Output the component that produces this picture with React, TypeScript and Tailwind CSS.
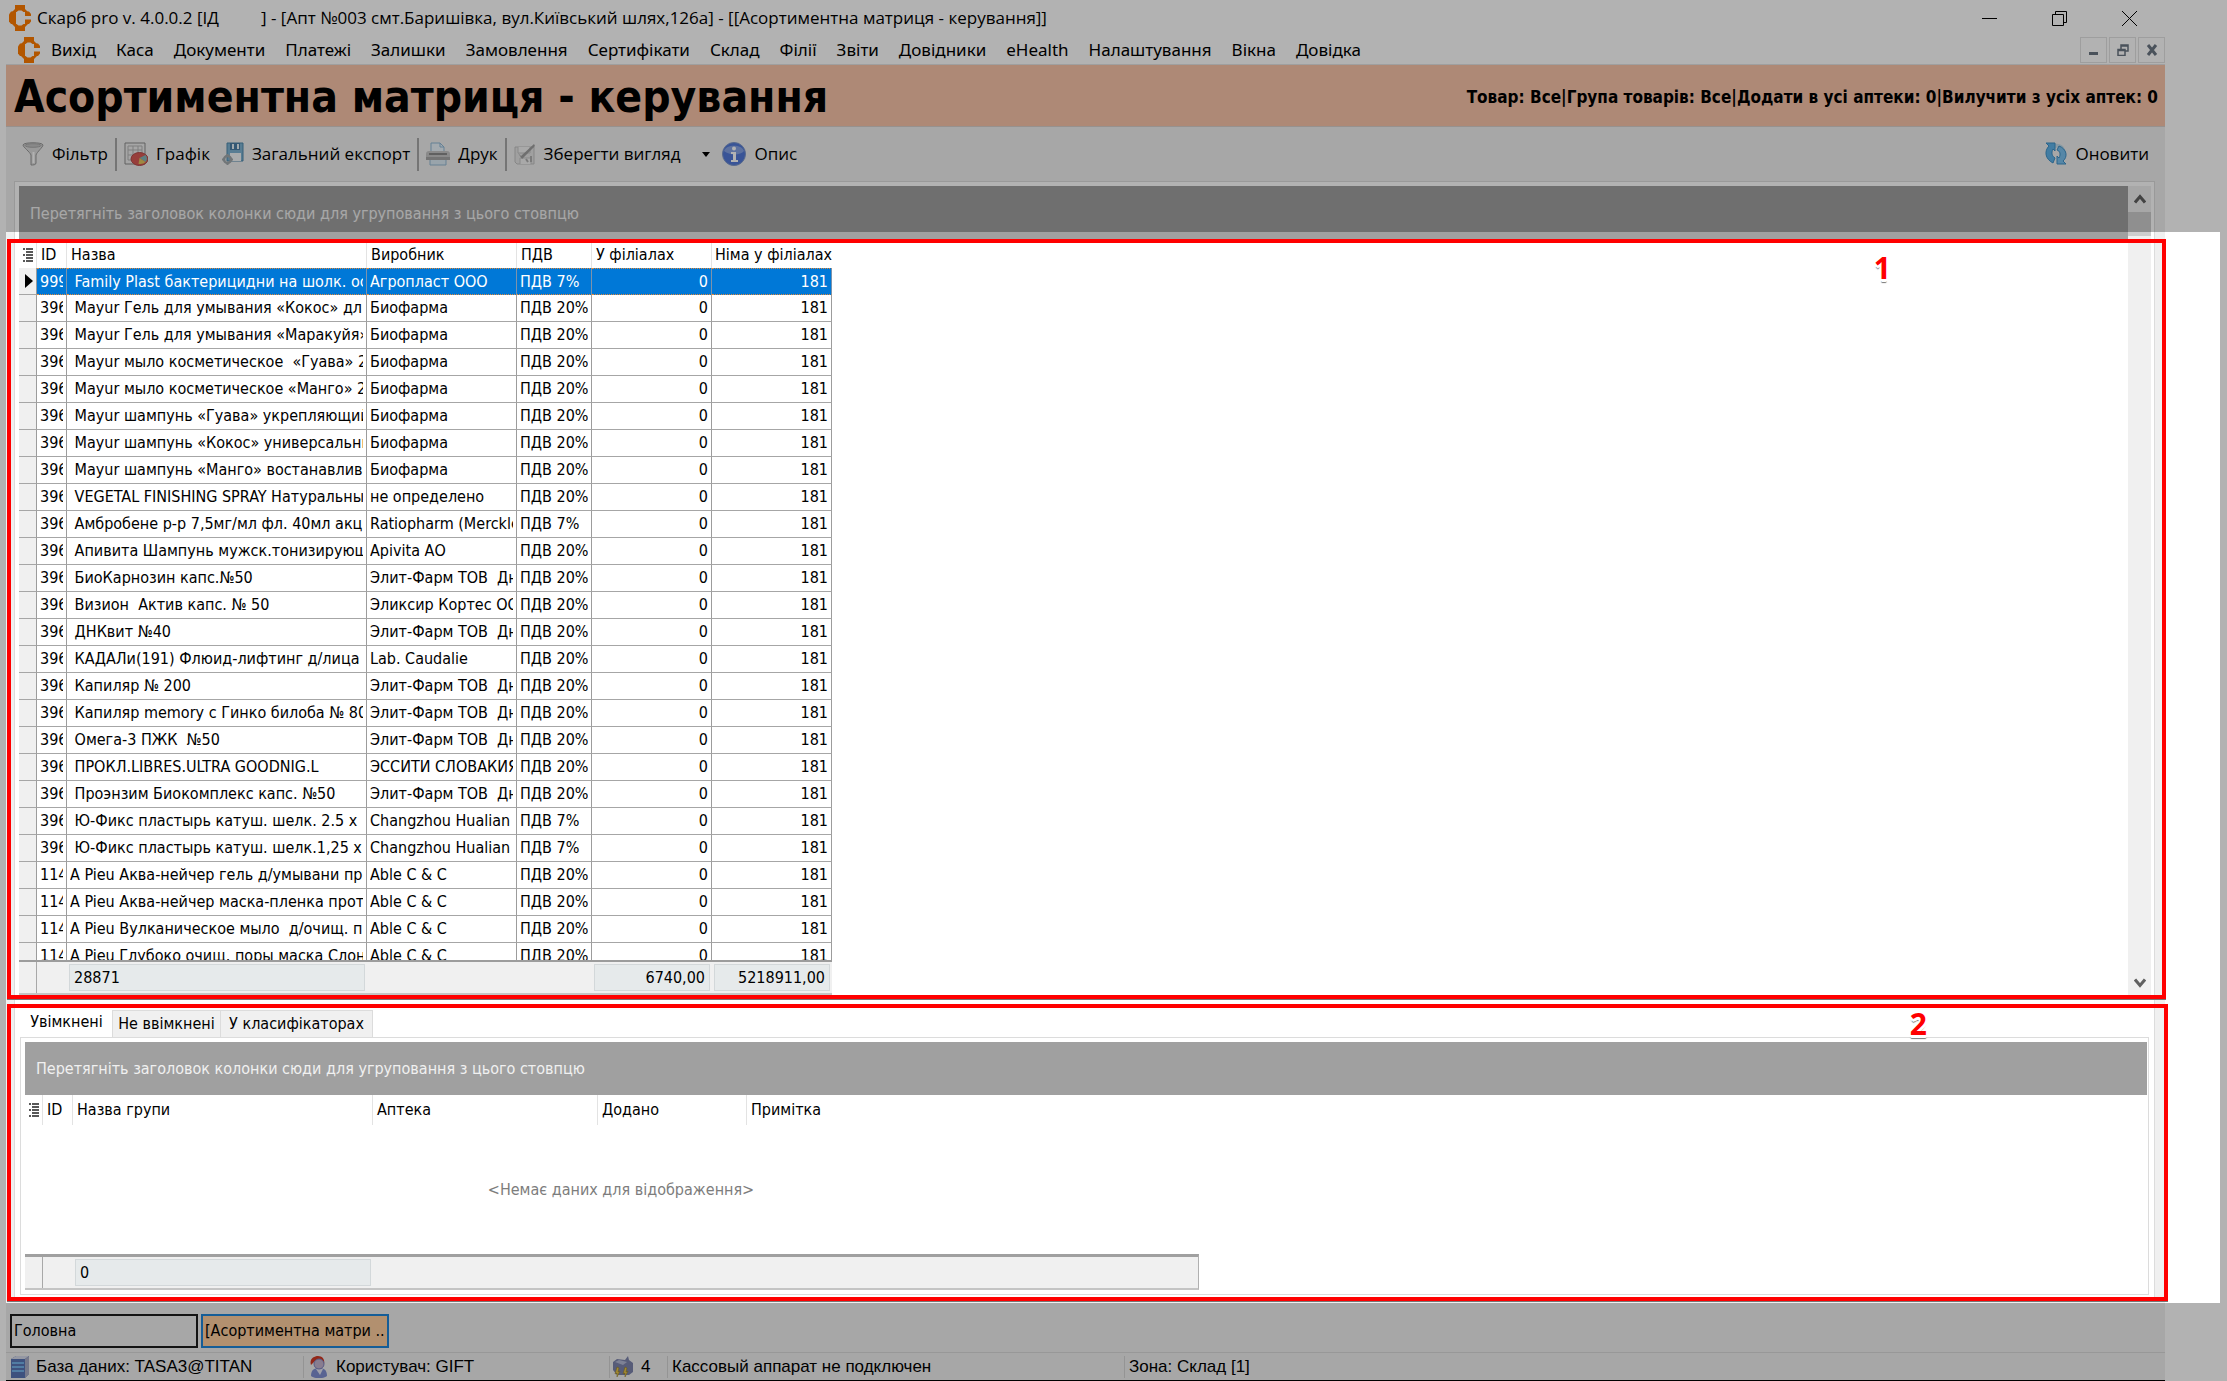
import type { ReactNode } from "react";

const MENU = [
  "Вихід", "Каса", "Документи", "Платежі", "Залишки", "Замовлення", "Сертифікати", "Склад",
  "Філії", "Звіти", "Довідники", "eHealth", "Налаштування", "Вікна", "Довідка",
];

const ROWS: [string, string, string, string][] = [
  ["999", " Family Plast бактерицидни на шолк. ос", "Агропласт ООО", "ПДВ 7%"],
  ["396", " Mayur Гель для умывания «Кокос» дл", "Биофарма", "ПДВ 20%"],
  ["396", " Mayur Гель для умывания «Маракуйя»", "Биофарма", "ПДВ 20%"],
  ["396", " Mayur мыло косметическое  «Гуава» 2", "Биофарма", "ПДВ 20%"],
  ["396", " Mayur мыло косметическое «Манго» 2", "Биофарма", "ПДВ 20%"],
  ["396", " Mayur шампунь «Гуава» укрепляющий", "Биофарма", "ПДВ 20%"],
  ["396", " Mayur шампунь «Кокос» универсальны", "Биофарма", "ПДВ 20%"],
  ["396", " Mayur шампунь «Манго» востанавлива", "Биофарма", "ПДВ 20%"],
  ["396", " VEGETAL FINISHING SPRAY Натуральны", "не определено", "ПДВ 20%"],
  ["396", " Амбробене р-р 7,5мг/мл фл. 40мл акци", "Ratiopharm (Merckle", "ПДВ 7%"],
  ["396", " Апивита Шампунь мужск.тонизирующ", "Apivita АО", "ПДВ 20%"],
  ["396", " БиоКарнозин капс.№50", "Элит-Фарм ТОВ  Дн", "ПДВ 20%"],
  ["396", " Визион  Актив капс. № 50", "Эликсир Кортес ОО", "ПДВ 20%"],
  ["396", " ДНКвит №40", "Элит-Фарм ТОВ  Дн", "ПДВ 20%"],
  ["396", " КАДАЛи(191) Флюид-лифтинг д/лица", "Lab. Caudalie", "ПДВ 20%"],
  ["396", " Капиляр № 200", "Элит-Фарм ТОВ  Дн", "ПДВ 20%"],
  ["396", " Капиляр memory с Гинко билоба № 80", "Элит-Фарм ТОВ  Дн", "ПДВ 20%"],
  ["396", " Омега-3 ПЖК  №50", "Элит-Фарм ТОВ  Дн", "ПДВ 20%"],
  ["396", " ПРОКЛ.LIBRES.ULTRA GOODNIG.L", "ЭССИТИ СЛОВАКИЯ", "ПДВ 20%"],
  ["396", " Проэнзим Биокомплекс капс. №50", "Элит-Фарм ТОВ  Дн", "ПДВ 20%"],
  ["396", " Ю-Фикс пластырь катуш. шелк. 2.5 х", "Changzhou Hualian", "ПДВ 7%"],
  ["396", " Ю-Фикс пластырь катуш. шелк.1,25 х", "Changzhou Hualian", "ПДВ 7%"],
  ["114", "A Pieu Аква-нейчер гель д/умывани пр", "Able C & C", "ПДВ 20%"],
  ["114", "A Pieu Аква-нейчер маска-пленка прот", "Able C & C", "ПДВ 20%"],
  ["114", "A Pieu Вулканическое мыло  д/очищ. п", "Able C & C", "ПДВ 20%"],
  ["114", "A Pieu Глубоко очищ. поры маска Слон", "Able C & C", "ПДВ 20%"],
];

const HINT = "Перетягніть заголовок колонки сюди для угруповання з цього стовпцю";

function Logo() {
  return (
    <svg viewBox="0 0 22 26" className="h-[26px] w-[22px] shrink-0" aria-hidden="true">
      <g fill="#ff7b00">
        <path d="M6 0h10v4l3 3h-4.500l-2-1.500h-3l-2 1.500H3l3-3z" />
        <path d="M6 26h10v-4l3-3h-4.500l-2 1.500h-3l-2-1.500H3l3 3z" />
        <path d="M2 6.500h5V19H2l-2-2.500v-7z" />
        <path d="M16 6.500h4l2 2.500v2h-6zM16 19h4l2-2.500v-2h-6z" />
      </g>
    </svg>
  );
}

function FilterIcon() {
  return (
    <svg viewBox="0 0 22 24" className="h-6 w-[22px]" aria-hidden="true">
      <path d="M1 3c0-3 20-3 20 0 0 2-6 7-7 10v8c0 2-3 2-5 2V13C8 10 1 5 1 3z" fill="#dcdcdc" stroke="#999" />
      <ellipse cx="11" cy="3.500" rx="8" ry="1.800" fill="#c4c4c4" stroke="#aaa" />
      <path d="M11.500 10v11" stroke="#fff" strokeWidth="2" />
    </svg>
  );
}

function ChartIcon() {
  return (
    <svg viewBox="0 0 24 24" className="size-6" aria-hidden="true">
      <path d="M1 1h20v21H1z" fill="#eee" stroke="#8b8b8b" />
      <path d="M4 4h14v14H4zM4 8h14M4 13h14M9 4v14M14 4v14" fill="none" stroke="#b5b5b5" />
      <ellipse cx="15.500" cy="17" rx="8.500" ry="6.500" fill="#d85a55" stroke="#b34a48" />
      <path d="M15.500 16l6-3c2 2 2 5 0 7z" fill="#86b7b9" />
      <path d="M15.500 16l6 4c-2 2-5 2-7 2z" fill="#e2c45f" />
    </svg>
  );
}

function ExportIcon() {
  return (
    <svg viewBox="0 0 22 24" className="h-6 w-[22px]" aria-hidden="true">
      <path d="M5 1h16v18H5z" fill="#7fb4d3" stroke="#4f88ab" />
      <path d="M8 1h10v7H8z" fill="#4b7ea6" />
      <path d="M10 2h2v5h-2zM15 2h2v5h-2z" fill="#e8f2f8" />
      <path d="M8 11h11v8H8z" fill="#f3f6f8" />
      <circle cx="5.500" cy="17.500" r="3.500" fill="none" stroke="#a3a9ad" strokeWidth="2.500" />
      <path d="M5.500 12v3M5.500 20v3M0 17.500h3M8 17.500h3" stroke="#a3a9ad" strokeWidth="2" />
    </svg>
  );
}

function PrinterIcon() {
  return (
    <svg viewBox="0 0 24 24" className="size-6" aria-hidden="true">
      <path d="M5 1h9l4 4v7H5z" fill="#eaf4fb" stroke="#8fb8d6" />
      <path d="M14 1v4h4" fill="none" stroke="#8fb8d6" />
      <path d="M3 9h18c2 0 3 1 3 3v6H0v-6c0-2 1-3 3-3z" fill="#c6c6c6" />
      <path d="M3 11h18v2H3z" fill="#8a8a8a" />
      <path d="M4 17h16v6H4z" fill="#dcebf5" stroke="#94b9d2" />
      <path d="M0 15h24v3H0z" fill="#a6a6a6" />
    </svg>
  );
}

function SaveViewIcon() {
  return (
    <svg viewBox="0 0 22 24" className="h-6 w-[22px]" aria-hidden="true">
      <path d="M1 5h19v17H3l-2-2z" fill="#e6e6e6" stroke="#c0c0c0" />
      <path d="M4 5v6h12V5M6 22v-6h11v6" fill="#f2f2f2" stroke="#c6c6c6" />
      <path d="M4 11l3 3L20 2l1 2L8 17z" fill="#9f9f9f" />
      <path d="M12 17l2 3M17 14v6" stroke="#b0b0b0" strokeWidth="2" />
    </svg>
  );
}

function InfoIcon() {
  return (
    <svg viewBox="0 0 24 24" className="size-6" aria-hidden="true">
      <circle cx="12" cy="12" r="11.500" fill="#5279d8" stroke="#7f98cb" />
      <path d="M2 9C4 2 20 2 22 9c-3 4-14 5-20 0z" fill="#86a3e4" />
      <circle cx="12" cy="6.500" r="2" fill="#fff" />
      <path d="M9 10h5v8h2v2H9v-2h2v-6H9z" fill="#fff" />
    </svg>
  );
}

function RefreshIcon() {
  return (
    <svg viewBox="0 0 22 24" className="h-6 w-[22px]" aria-hidden="true">
      <path d="M10 2c6-1 11 3 10 9l-4-2c0-3-3-4-6-3z" fill="#c3dcea" />
      <path d="M1 1h9v8L8 7c-2 4-1 7 2 9l-2 5C0 17-1 9 4 4z" fill="#5fb4ea" stroke="#3f90c6" />
      <path d="M21 22h-9v-8l2 2c2-4 1-7-2-8l2-4c8 3 9 11 4 15z" fill="#7cc2ef" stroke="#3f90c6" />
    </svg>
  );
}

function DatabaseIcon() {
  return (
    <svg viewBox="0 0 20 22" className="h-[22px] w-5 shrink-0" aria-hidden="true">
      <path d="M1 3l5-3h13v18l-4 4H1z" fill="#5a74b5" />
      <path d="M1 3l5-3h13l-4 3z" fill="#d6daea" />
      <path d="M15 3l4-3v18l-4 4z" fill="#a9adc6" />
      <path d="M2 7h12M2 11h12M2 15h12" stroke="#74b2ea" strokeWidth="2" />
    </svg>
  );
}

function UserIcon() {
  return (
    <svg viewBox="0 0 18 22" className="h-[22px] w-[18px] shrink-0" aria-hidden="true">
      <path d="M1 20c0-6 3-8 8-8s8 2 8 8c-4 3-12 3-16 0z" fill="#7f8fd2" />
      <path d="M6 13l4 6 3-6z" fill="#e4e6f4" />
      <path d="M1 9C-1 3 4 0 8 0c5 0 7 4 6 8l-4-4-5 1z" fill="#d23a25" />
      <circle cx="9" cy="8" r="5" fill="#c3b3cf" stroke="#7f82bd" />
    </svg>
  );
}

function PrintersIcon() {
  return (
    <svg viewBox="0 0 20 22" className="h-[22px] w-5 shrink-0" aria-hidden="true">
      <path d="M0 6l4-3 8 1 3-4 1 4 4 3v9l-4 3H4l-4-5z" fill="#7d84ad" />
      <path d="M2 6l4-2 8 2-4 3z" fill="#b4b9d6" />
      <path d="M4 11l2 1-1 4 2-1-3 6 0-4-2 1zM12 11l2 1-1 4 2-1-3 6 0-4-2 1z" fill="#e9c648" stroke="#8b7420" strokeWidth=".5" />
    </svg>
  );
}

function ListIcon() {
  return (
    <svg viewBox="0 0 10 14" className="mx-auto h-[14px] w-[10px]" aria-hidden="true">
      <path d="M3 1h7M3 4h7M3 7h7M3 10h7M3 13h7" stroke="#222" strokeWidth="1.400" />
      <path d="M0 1h2M0 7h2M0 13h2" stroke="#222" strokeWidth="1.400" />
    </svg>
  );
}

function ToolButton({ icon, children, label }: { icon: ReactNode; children?: ReactNode; label: string }) {
  return (
    <button type="button" className="flex items-center gap-2 whitespace-nowrap">
      {icon}
      {label}
      {children}
    </button>
  );
}

function Separator() {
  return <span className="mx-[7px] h-[33px] w-[2px] bg-[#a8a8a8]" />;
}

function Callout({ n, className }: { n: string; className: string }) {
  return (
    <span
      className={
        "absolute font-['Open_Sans',sans-serif] text-[30px] leading-[30px] font-bold text-[#ff0000] [text-shadow:0_3px_0_#fff,2px_2px_0_#fff,-2px_2px_0_#fff,0_4px_1px_#777] " +
        className
      }
    >
      {n}
    </span>
  );
}

const CELL = "h-[27px] border-r border-b border-b-[#a6a6a6] border-r-[#9c9c9c] p-0";
const CELL_SELECTED = "h-[27px] border-y border-r border-y-[#e08a3c] border-r-[#7d93ab] [border-bottom-style:dotted] [border-top-style:dotted] bg-[#0078d7] p-0 text-white";
const HEAD = "h-[26px] border-r border-[#e3e3e3] p-0 pl-1 text-left font-normal whitespace-nowrap";
const CLIP = "mx-[3px] overflow-hidden whitespace-pre";

function ProductTable() {
  return (
    <table className="w-[813px] table-fixed border-separate border-spacing-0">
      <colgroup>
        <col className="w-[18px]" />
        <col className="w-[30px]" />
        <col className="w-[300px]" />
        <col className="w-[150px]" />
        <col className="w-[75px]" />
        <col className="w-[120px]" />
        <col className="w-[120px]" />
      </colgroup>
      <thead>
        <tr>
          <th className="h-[26px] border-r border-[#e3e3e3] p-0"><ListIcon /></th>
          <th className={HEAD}>ID</th>
          <th className={HEAD}>Назва</th>
          <th className={HEAD}>Виробник</th>
          <th className={HEAD}>ПДВ</th>
          <th className={HEAD}>У філіалах</th>
          <th className="p-0 pl-[3px] text-left font-normal whitespace-nowrap">Німа у філіалах</th>
        </tr>
      </thead>
      <tbody>
        {ROWS.map(([id, name, maker, vat], i) => {
          const cell = i === 0 ? CELL_SELECTED : CELL;
          return (
            <tr key={i}>
              <td className={CELL + " bg-[#f0f0f0]"}>
                {i === 0 && (
                  <svg viewBox="0 0 8 14" className="ml-[6px] h-[14px] w-2" aria-hidden="true">
                    <path d="M0 0l8 7-8 7z" fill="#000" />
                  </svg>
                )}
              </td>
              <td className={cell}><div className={CLIP}>{id}</div></td>
              <td className={cell}><div className={CLIP}>{name}</div></td>
              <td className={cell}><div className={CLIP}>{maker}</div></td>
              <td className={cell}><div className={CLIP}>{vat}</div></td>
              <td className={cell}><div className="mx-[3px] text-right">0</div></td>
              <td className={cell}><div className="mx-[3px] text-right">181</div></td>
            </tr>
          );
        })}
      </tbody>
    </table>
  );
}

function GroupBar({ className }: { className: string }) {
  return (
    <div className={"flex items-center bg-[#a0a0a0] text-[#f0f0f0] " + className}>{HINT}</div>
  );
}

const SUM = "mx-[2px] my-[2px] flex items-center border border-[#d3d8da] bg-[#e6eaeb] px-1";

export default function App() {
  return (
    <div className="relative flex h-screen min-h-[1100px] flex-col overflow-hidden bg-white font-['DejaVu_Sans_Condensed','DejaVu_Sans',sans-serif] text-[16px] leading-[22px] text-black">
      <header className="flex h-9 items-center pl-[9px] pr-[90px] font-['Open_Sans',sans-serif] text-[17px]">
        <Logo />
        <h1 className="flex flex-1 pl-[6px] whitespace-nowrap">
          <span className="w-[224px]">Скарб pro v. 4.0.0.2 [ІД</span>
          <span>] - [Апт №003 смт.Баришівка, вул.Київський шлях,126а] - [[Асортиментна матриця - керування]]</span>
        </h1>
        <div className="flex gap-[55px]">
          <button type="button" aria-label="Згорнути">
            <svg viewBox="0 0 15 15" className="size-[15px]"><path d="M0 7.500h15" stroke="#000" /></svg>
          </button>
          <button type="button" aria-label="Відновити">
            <svg viewBox="0 0 15 15" className="size-[15px]"><path d="M.5 3.500h11v11H.5zM3.500 3.500v-3h11v11h-3" fill="none" stroke="#000" /></svg>
          </button>
          <button type="button" aria-label="Закрити">
            <svg viewBox="0 0 15 15" className="size-[15px]"><path d="M0 0l15 15M15 0L0 15" stroke="#000" /></svg>
          </button>
        </div>
      </header>

      <div className="mr-[62px] ml-[6px] flex min-h-0 flex-1 flex-col bg-[#f0f0f0]">
        <nav className="flex h-[29px] items-center border-b border-[#e4e4e4] bg-white pl-3">
          <Logo />
          <div className="flex flex-1 gap-5 pl-[11px] font-['Noto_Sans',sans-serif] text-[17px]">
            {MENU.map((m) => (
              <button key={m} type="button" className="whitespace-nowrap">{m}</button>
            ))}
          </div>
          <div className="flex gap-[2px]">
            <button type="button" aria-label="Згорнути вікно" className="grid h-[26px] w-[27px] place-items-center border border-[#e2e2e2]">
              <svg viewBox="0 0 12 12" className="size-3"><path d="M1 8h9v3H1z" fill="#6b7683" /></svg>
            </button>
            <button type="button" aria-label="Відновити вікно" className="grid h-[26px] w-[27px] place-items-center border border-[#e2e2e2]">
              <svg viewBox="0 0 12 12" className="size-3"><path d="M1 5.500h7v6H1zM4 5V1h7v6H8.500M4 2h7M1 6.500h7" fill="none" stroke="#6b7683" strokeWidth="1.500" /></svg>
            </button>
            <button type="button" aria-label="Закрити вікно" className="grid h-[26px] w-[27px] place-items-center border border-[#e2e2e2]">
              <svg viewBox="0 0 12 12" className="size-3"><path d="M2 1l8 10M10 1L2 11" stroke="#6b7683" strokeWidth="3" /></svg>
            </button>
          </div>
        </nav>

        <div className="flex h-[62px] items-center justify-between border-b border-[#d8d0cc] bg-[#f9c5aa] pt-[2px] pr-[7px] pl-2">
          <h2 className="text-[44px] leading-[60px] font-bold whitespace-nowrap">Асортиментна матриця - керування</h2>
          <p className="text-[17px] font-bold whitespace-nowrap">
            Товар: Все|Група товарів: Все|Додати в усі аптеки: 0|Вилучити з усіх аптек: 0
          </p>
        </div>

        <div className="flex h-[54px] items-center justify-between pr-4 pl-4 font-['Open_Sans',sans-serif] text-[17px]">
          <div className="flex items-center">
            <ToolButton icon={<FilterIcon />} label="Фільтр" />
            <Separator />
            <ToolButton icon={<ChartIcon />} label="Графік" />
            <span className="w-3" />
            <ToolButton icon={<ExportIcon />} label="Загальний експорт" />
            <Separator />
            <ToolButton icon={<PrinterIcon />} label="Друк" />
            <Separator />
            <ToolButton icon={<SaveViewIcon />} label="Зберегти вигляд">
              <svg viewBox="0 0 8 5" className="mr-3 ml-[14px] h-[5px] w-2" aria-hidden="true"><path d="M0 0h8L4 5z" /></svg>
            </ToolButton>
            <ToolButton icon={<InfoIcon />} label="Опис" />
          </div>
          <ToolButton icon={<RefreshIcon />} label="Оновити" />
        </div>

        <main className="relative flex min-h-0 flex-1 flex-col pr-[10px] pb-[2px] pl-2">
          <div className="pointer-events-none absolute top-[51px] -right-[55px] bottom-0 left-0 z-10 shadow-[0_0_0_9999px_rgba(0,0,0,0.3)]" />
          <div className="absolute top-[51px] -right-[55px] bottom-0 w-[55px] bg-white" />

          <div className="flex min-h-0 flex-1 flex-col border-x border-t border-[#dcdcdc] bg-white pt-1">
            <section className="relative flex min-h-0 flex-1 pr-[3px] pl-1">
              <div className="flex min-w-0 flex-1 flex-col">
                <GroupBar className="h-14 shrink-0 pl-[11px]" />
                <div className="min-h-0 flex-1 overflow-hidden"><ProductTable /></div>
                <div className="mb-1 grid h-[35px] w-[813px] shrink-0 grid-cols-[18px_30px_300px_150px_75px_120px_120px] border-y-2 border-t-[#9c9c9c] border-b-[#c4c4c4] bg-[#f0f0f0]">
                  <span className="border-r border-[#a8a8a8]" />
                  <span />
                  <output className={SUM}>28871</output>
                  <span />
                  <span />
                  <output className={SUM + " justify-end"}>6740,00</output>
                  <output className={SUM + " justify-end"}>5218911,00</output>
                </div>
              </div>
              <div className="flex w-[23px] flex-col items-center bg-[#f0f0f0]">
                <button type="button" aria-label="Вгору" className="grid h-[26px] w-full place-items-center">
                  <svg viewBox="0 0 12 10" className="h-[10px] w-3"><path d="M1 8.500l5-6 5 6" fill="none" stroke="#606060" strokeWidth="3" /></svg>
                </button>
                <span className="h-6 w-full bg-[#cdcdcd]" />
                <button type="button" aria-label="Вниз" className="mt-auto mb-[3px] grid h-[26px] w-full place-items-center">
                  <svg viewBox="0 0 12 10" className="h-[10px] w-3"><path d="M1 1.500l5 6 5-6" fill="none" stroke="#606060" strokeWidth="3" /></svg>
                </button>
              </div>
              <div className="pointer-events-none absolute top-[53px] -right-3 bottom-0 -left-2 z-20 border-4 border-[#ff0000] shadow-[0_1px_0_#777]">
                <Callout n="1" className="top-[10px] right-[271px]" />
              </div>
            </section>

            <section className="relative mt-[5px] flex h-[297px] shrink-0 flex-col pt-[6px] pr-[5px] pb-[6px] pl-[5px]">
              <div role="tablist" className="flex h-7 items-end pl-px">
                <button type="button" role="tab" aria-selected="true" className="h-full w-[92px] border-r border-[#dcdcdc] pb-1 whitespace-nowrap">Увімкнені</button>
                <button type="button" role="tab" aria-selected="false" className="h-[27px] w-[108px] border-t border-r border-[#dcdcdc] bg-[#f0f0f0] whitespace-nowrap">Не ввімкнені</button>
                <button type="button" role="tab" aria-selected="false" className="h-[27px] w-[152px] border-t border-r border-[#dcdcdc] bg-[#f0f0f0] whitespace-nowrap">У класифікаторах</button>
              </div>
              <div className="flex flex-1 flex-col border border-[#dcdcdc] pt-1 pr-px pb-1 pl-1">
                <GroupBar className="h-[53px] shrink-0 pl-[11px]" />
                <table className="w-[1174px] table-fixed border-separate border-spacing-0">
                  <colgroup>
                    <col className="w-[18px]" />
                    <col className="w-[30px]" />
                    <col className="w-[300px]" />
                    <col className="w-[225px]" />
                    <col className="w-[149px]" />
                    <col />
                  </colgroup>
                  <thead>
                    <tr>
                      <th className="h-[30px] border-r border-[#e3e3e3] p-0"><ListIcon /></th>
                      <th className={HEAD}>ID</th>
                      <th className={HEAD}>Назва групи</th>
                      <th className={HEAD}>Аптека</th>
                      <th className={HEAD}>Додано</th>
                      <th className="p-0 pl-1 text-left font-normal">Примітка</th>
                    </tr>
                  </thead>
                  <tbody>
                    <tr>
                      <td />
                      <td colSpan={5} className="h-[129px] p-0 text-center text-[#7d7d7d]">&lt;Немає даних для відображення&gt;</td>
                    </tr>
                  </tbody>
                </table>
                <div className="mt-auto grid h-[36px] w-[1174px] grid-cols-[18px_30px_300px_1fr] border-t-[3px] border-r border-b-2 border-t-[#a0a0a0] border-r-[#b0b0b0] border-b-[#c4c4c4] bg-[#f0f0f0]">
                  <span className="border-r border-[#a8a8a8]" />
                  <span />
                  <output className={SUM}>0</output>
                </div>
              </div>
              <div className="pointer-events-none absolute inset-y-0 -right-[14px] -left-2 z-20 border-4 border-[#ff0000] shadow-[0_1px_0_#777]">
                <Callout n="2" className="top-px right-[237px]" />
              </div>
            </section>
          </div>
        </main>

        <div className="flex h-[49px] items-start gap-[3px] pt-[11px] pl-1">
          <button type="button" className="h-[34px] w-[188px] border-2 border-[#1c1c1c] px-[2px] text-left">Головна</button>
          <button type="button" className="h-[34px] w-[188px] overflow-hidden border-2 border-[#1f86d8] bg-[#ffce9f] px-[2px] text-left whitespace-nowrap">[Асортиментна матри ..</button>
        </div>

        <footer className="flex h-[29px] items-center border-t border-b border-t-[#dadada] border-b-black pl-1 font-['Liberation_Sans',sans-serif] text-[17px] whitespace-nowrap">
          <span className="flex w-[293px] items-center gap-[6px]"><DatabaseIcon />База даних: TASA3@TITAN</span>
          <span className="flex w-[306px] items-center gap-2 border-l border-[#d5d5d5] pl-[6px]"><UserIcon />Користувач: GIFT</span>
          <span className="flex w-[58px] items-center gap-2 border-l border-[#d5d5d5] pl-[3px]"><PrintersIcon />4</span>
          <span className="w-[457px] border-l border-[#d5d5d5] pl-1">Кассовый аппарат не подключен</span>
          <span className="border-l border-[#d5d5d5] pl-1">Зона: Склад [1]</span>
        </footer>
      </div>
    </div>
  );
}
